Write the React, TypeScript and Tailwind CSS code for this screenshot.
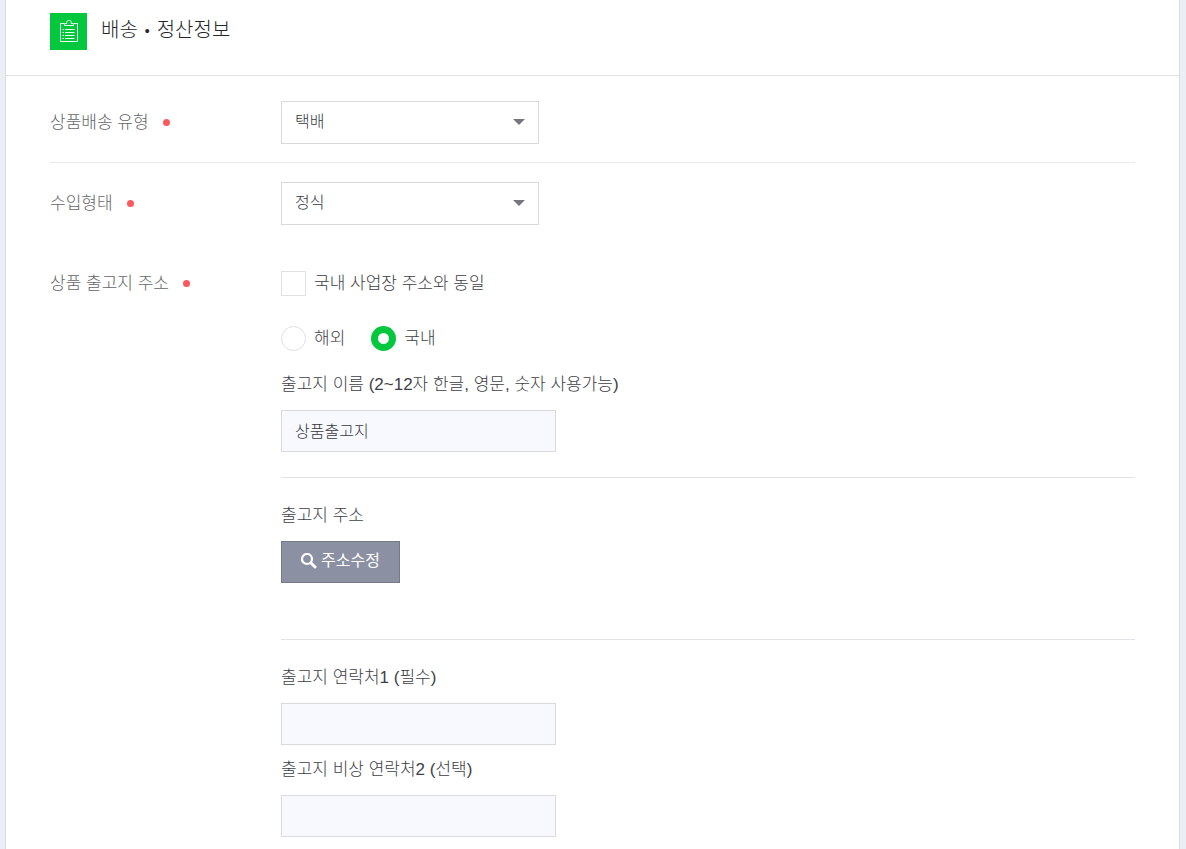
import React, { useState } from 'react';

const ClipboardIcon = () => (
  <svg width="19" height="23" viewBox="0 0 19 23" fill="none" stroke="#e9fbee" aria-hidden="true">
    <path d="M5 3.5H1.5v18h17v-18H15" />
    <path d="M5.5 5.5v-2h2.3V2.2c0-1 .6-1.7 1.5-1.7h1.4c.9 0 1.5.7 1.5 1.7v1.3h2.3v2z" />
    <path d="M3.5 9.5H5M3.5 12.5H5M3.5 15.5H5M3.5 18.5H5M6 9.5h9.5M6 12.5h9.5M6 15.5h9.5M6 18.5h9.5" />
  </svg>
);

const SearchIcon = () => (
  <svg width="16" height="16" viewBox="0 0 16 16" fill="none" stroke="#fff" aria-hidden="true">
    <circle cx="6" cy="6" r="5" strokeWidth="2.2" />
    <path d="M10 10l4 4" strokeWidth="3" strokeLinecap="round" />
  </svg>
);

const RequiredDot = () => <span className="ml-[14px] h-[7px] w-[7px] rounded-full bg-[#fa5a5f]"></span>;

interface SelectFieldProps {
  id: string;
  options: string[];
}

const SelectField = ({ id, options }: SelectFieldProps) => (
  <div className="relative w-[258px]">
    <select
      id={id}
      className="block h-[43px] w-full appearance-none border border-[#d9dadd] bg-white pr-8 pb-0.5 pl-[13px] text-base text-[#36393e] focus:outline-none"
    >
      {options.map((option) => (
        <option key={option}>{option}</option>
      ))}
    </select>
    <svg className="pointer-events-none absolute top-[18px] right-[14px]" width="12" height="6" viewBox="0 0 12 6" aria-hidden="true">
      <path d="M0 0h12L6 6z" fill="#75777d" />
    </svg>
  </div>
);

interface TextFieldProps {
  id: string;
  label: string;
  defaultValue?: string;
}

const TextField = ({ id, label, defaultValue = '' }: TextFieldProps) => (
  <div>
    <label htmlFor={id} className="block leading-[26px]">{label}</label>
    <input
      id={id}
      type="text"
      defaultValue={defaultValue}
      className="mt-3 block h-[42px] w-[275px] border border-[#d9dadf] bg-[#f8f9fe] px-[13px] pb-0.5 text-base text-[#36393e] focus:outline-none"
    />
  </div>
);

const App = () => {
  const [region, setRegion] = useState('국내');

  return (
    <div className="min-h-screen bg-[#ebeff5] pr-[6px] pl-[5px] font-['Liberation_Sans','Noto_Sans_CJK_KR',sans-serif] text-[17px] font-light text-[#3e4046]">
      <main className="min-h-screen border-x border-[#d9dce1] bg-white">
        <header className="flex items-start gap-[14px] border-b border-[#e0e2e5] px-11 pt-[13px] pb-[25px]">
          <span className="flex h-[37px] w-[37px] items-center justify-center bg-[#03c73c]">
            <ClipboardIcon />
          </span>
          <h1 className="flex items-center gap-[7px] text-xl leading-[35px] text-[#242629]">
            배송 <span className="text-sm">•</span> 정산정보
          </h1>
        </header>

        <form className="px-11 pb-3" onSubmit={(e) => e.preventDefault()}>
          <div className="flex border-b border-[#e8e9eb] pt-[25px] pb-[18px]">
            <label htmlFor="delivery-type" className="flex h-[43px] w-[231px] shrink-0 items-center text-[#646669]">
              상품배송 유형 <RequiredDot />
            </label>
            <SelectField id="delivery-type" options={['택배', '직접배송']} />
          </div>

          <div className="flex pt-[19px]">
            <label htmlFor="import-type" className="flex h-[43px] w-[231px] shrink-0 items-center text-[#646669]">
              수입형태 <RequiredDot />
            </label>
            <SelectField id="import-type" options={['정식', '병행']} />
          </div>

          <fieldset className="flex pt-[46px]" aria-labelledby="release-address">
            <div id="release-address" className="flex h-[25px] w-[231px] shrink-0 items-center text-[#646669]">
              상품 출고지 주소 <RequiredDot />
            </div>

            <div className="min-w-0 flex-1">
              <label className="flex h-[25px] items-center gap-2">
                <input
                  type="checkbox"
                  className="h-[25px] w-[25px] appearance-none border border-[#e0e1e5] bg-white checked:bg-[#03c73c]"
                />
                국내 사업장 주소와 동일
              </label>

              <div className="mt-[30px] flex h-[25px] gap-[26px]">
                {['해외', '국내'].map((name) => (
                  <label key={name} className="flex items-center gap-2">
                    <input
                      type="radio"
                      name="region"
                      checked={region === name}
                      onChange={() => setRegion(name)}
                      className="h-[25px] w-[25px] appearance-none rounded-full border border-[#e0e1e5] bg-white checked:border-[7px] checked:border-[#03c73c]"
                    />
                    {name}
                  </label>
                ))}
              </div>

              <div className="mt-[21px] border-b border-[#e2e3e6] pb-[25px]">
                <TextField id="place-name" label="출고지 이름 (2~12자 한글, 영문, 숫자 사용가능)" defaultValue="상품출고지" />
              </div>

              <div className="border-b border-[#e2e3e6] pt-[25px] pb-14">
                <p className="leading-[26px]">출고지 주소</p>
                <button
                  type="button"
                  className="mt-3 flex h-[42px] w-[119px] items-center justify-center gap-1 border border-[#747a8a] bg-[#8b91a3] pb-0.5 text-base font-normal text-white"
                >
                  <SearchIcon />
                  주소수정
                </button>
              </div>

              <div className="flex flex-col gap-3 pt-[25px]">
                <TextField id="phone1" label="출고지 연락처1 (필수)" />
                <TextField id="phone2" label="출고지 비상 연락처2 (선택)" />
              </div>
            </div>
          </fieldset>
        </form>
      </main>
    </div>
  );
};

export default App;
